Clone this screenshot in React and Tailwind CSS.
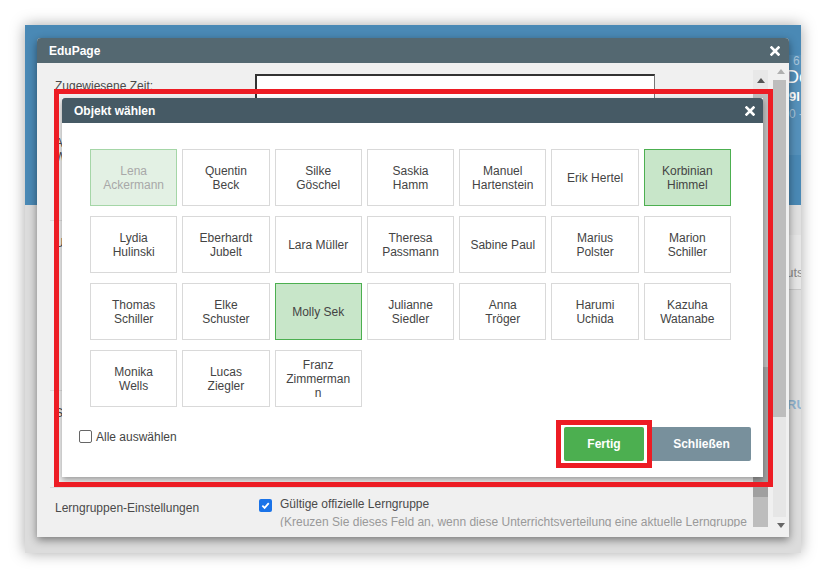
import React from 'react';

const PEOPLE = [
  { lines: ['Lena', 'Ackermann'], state: 'disabled' },
  { lines: ['Quentin', 'Beck'] },
  { lines: ['Silke', 'Göschel'] },
  { lines: ['Saskia', 'Hamm'] },
  { lines: ['Manuel', 'Hartenstein'] },
  { lines: ['Erik Hertel'] },
  { lines: ['Korbinian', 'Himmel'], state: 'selected' },
  { lines: ['Lydia', 'Hulinski'] },
  { lines: ['Eberhardt', 'Jubelt'] },
  { lines: ['Lara Müller'] },
  { lines: ['Theresa', 'Passmann'] },
  { lines: ['Sabine Paul'] },
  { lines: ['Marius', 'Polster'] },
  { lines: ['Marion', 'Schiller'] },
  { lines: ['Thomas', 'Schiller'] },
  { lines: ['Elke', 'Schuster'] },
  { lines: ['Molly Sek'], state: 'selected' },
  { lines: ['Julianne', 'Siedler'] },
  { lines: ['Anna', 'Tröger'] },
  { lines: ['Harumi', 'Uchida'] },
  { lines: ['Kazuha', 'Watanabe'] },
  { lines: ['Monika', 'Wells'] },
  { lines: ['Lucas', 'Ziegler'] },
  { lines: ['Franz', 'Zimmerman', 'n'] },
];

const CloseX = () => (
  <svg width="10" height="10" viewBox="0 0 10 10">
    <path d="M1.5 1.5 L8.5 8.5 M8.5 1.5 L1.5 8.5" stroke="white" strokeWidth="2.6" strokeLinecap="square" />
  </svg>
);

const Arrow = ({ up, color }) => (
  <svg width="8" height="5" viewBox="0 0 8 5">
    <polygon points={up ? '0,5 8,5 4,0' : '0,0 8,0 4,5'} fill={color} />
  </svg>
);

const cellClass = (state) => {
  if (state === 'disabled') return 'bg-[#e3f1e4] border-[#a5d6a7] text-[#a8a8a8]';
  if (state === 'selected') return 'bg-[#c8e6c9] border-[#4caf50] text-[#444]';
  return 'bg-white border-[#d9d9d9] text-[#444]';
};

const PersonCell = ({ person }) => (
  <div className={`h-[57px] border flex flex-col items-center justify-center text-center text-[12px] leading-[14px] ${cellClass(person.state)}`}>
    {person.lines.map((l, i) => <span key={i}>{l}</span>)}
  </div>
);

const EduPageDialog = () => (
  <div className="absolute left-[12px] top-[13px] w-[752px] h-[499px] bg-[#f0f0f0] rounded-t-[4px] shadow-[0_3px_8px_rgba(0,0,0,0.45)]">
    <div className="h-[25px] bg-[#546871] rounded-t-[4px] flex items-center justify-between pl-[12px] pr-[9px]">
      <span className="text-white font-bold text-[12px]">EduPage</span>
      <CloseX />
    </div>
    <div className="flex h-[474px]">
      <div className="w-[716px] pl-[13px] h-[464px] overflow-hidden text-[12px] text-[#4a4a4a]">
        <div className="h-[158px] border-b border-[#dcdcdc] pl-[5px]">
          <div className="flex pt-[11px]">
            <div className="w-[200px] pt-[5px] leading-[14px]">Zugewiesene Zeit:</div>
            <div className="w-[400px] h-[56px] bg-white border border-[#777] border-t-2 border-l-2 border-t-[#333] border-l-[#333]" />
          </div>
          <div className="mt-[6px] leading-[14px]">
            <div>Anzahl der</div>
            <div>Wochenstunden</div>
          </div>
        </div>
        <div className="h-[170px] border-b border-[#dcdcdc] pl-[5px] pt-[15px] leading-[14px]">Unterrichtseinheiten</div>
        <div className="h-[97px] border-b border-[#dcdcdc] pl-[5px] pt-[15px] leading-[14px]">Stundenplan</div>
        <div className="flex pl-[5px] pt-[9px]">
          <div className="w-[200px] pt-[4px] leading-[14px]">Lerngruppen-Einstellungen</div>
          <div className="ml-[4px] mt-[2px] w-[13px] h-[13px] rounded-[2px] bg-[#1a73e8] flex items-center justify-center">
            <svg width="9" height="9" viewBox="0 0 10 10">
              <path d="M1.5 5.2 L4 7.6 L8.6 2.4" stroke="white" strokeWidth="2" fill="none" />
            </svg>
          </div>
          <div className="ml-[8px] leading-[14px]">
            <div>Gültige offizielle Lerngruppe</div>
            <div className="mt-[4px] text-[#999] whitespace-nowrap">(Kreuzen Sie dieses Feld an, wenn diese Unterrichtsverteilung eine aktuelle Lerngruppe</div>
          </div>
        </div>
      </div>
      <div className="w-[15px] mt-[7px] h-[457px] flex flex-col bg-[#bdbdbd]">
        <div className="h-[20px] bg-[#e8e8e8] flex items-center justify-center">
          <Arrow up color="#555" />
        </div>
        <div className="h-[277px]" />
        <div className="h-[130px] bg-[#a0a0a0]" />
      </div>
      <div className="w-[4px]" />
      <div className="w-[17px] h-[474px] flex flex-col">
        <div className="h-[17px] flex items-center justify-center pl-[1px]">
          <Arrow up color="#b0b0b0" />
        </div>
        <div className="h-[337px] ml-[1px] mr-[3px] bg-[#bdbdbd]" />
        <div className="h-[100px] ml-[1px] mr-[3px] bg-[#e6e6e6]" />
        <div className="h-[17px] flex items-center justify-center">
          <Arrow color="#666" />
        </div>
      </div>
    </div>
  </div>
);

const ObjectDialog = () => (
  <div className="absolute left-[37px] top-[73px] w-[701px] h-[379px] bg-white shadow-[0_3px_6px_rgba(0,0,0,0.35)]">
    <div className="h-[25px] bg-[#465a65] rounded-t-[3px] flex items-center justify-between pl-[12px] pr-[8px]">
      <span className="text-white font-bold text-[12px]">Objekt wählen</span>
      <CloseX />
    </div>
    <div className="pt-[26px] pl-[28px]">
      <div className="grid grid-cols-7 w-[641px] gap-x-[5px] gap-y-[10px]">
        {PEOPLE.map((p, i) => <PersonCell key={i} person={p} />)}
      </div>
    </div>
    <div className="mt-[13px] flex justify-between pl-[17px] pr-[12px]">
      <label className="mt-[10px] flex items-center gap-[4px] h-[13px] text-[12px] text-[#444]">
        <span className="w-[13px] h-[13px] border border-[#666] rounded-[2px] bg-white" />
        <span>Alle auswählen</span>
      </label>
      <div className="flex items-center">
        <div className="border-[5px] border-[#ed1c24] px-[3px] py-[2px] bg-white">
          <button className="w-[80px] h-[34px] bg-[#4caf50] rounded-[2px] text-white font-bold text-[12px]">Fertig</button>
        </div>
        <button className="w-[99px] h-[34px] bg-[#78909c] rounded-r-[2px] text-white font-bold text-[12px]">Schließen</button>
      </div>
    </div>
  </div>
);

export default function App() {
  return (
    <div className="w-[826px] h-[578px] bg-white pt-[25px] pl-[25px] font-['Liberation_Sans',Arial,sans-serif]">
      <div className="relative w-[776px] h-[528px] overflow-hidden bg-[#dcdcdc] shadow-[0_0_14px_rgba(0,0,0,0.35)]">
        <div className="h-[180px] bg-[#4a89b5] flex">
          <div className="w-[756px] shrink-0" />
          <div className="mt-[30px] h-[100px] w-[40px] shrink-0 bg-[#5591bb] pl-[5px] text-white leading-none whitespace-nowrap">
            <div className="text-[12px] text-[#a9c6dc] pl-[7px]">6</div>
            <div className="text-[18px] mt-[1px]">De</div>
            <div className="text-[13px] font-bold mt-[4px] pl-[3px]">9I</div>
            <div className="text-[12px] text-[#a9c6dc] mt-[5px] pl-[3px]">0 -</div>
          </div>
        </div>
        <div className="flex">
          <div className="w-[756px] shrink-0" />
          <div className="w-[40px] shrink-0 text-[13px] whitespace-nowrap">
            <div className="h-[30px] bg-[#e0e0e0]" />
            <div className="h-[55px] bg-[#e6e6e6] border-b border-[#c8c8c8] pt-[28px] text-[#888]">
              <span className="ml-[-23px]">Layouts</span>
            </div>
            <div className="pt-[105px] pl-[6px] text-[#8fb3cf] font-bold">RU</div>
          </div>
        </div>
        <EduPageDialog />
        <ObjectDialog />
        <div className="absolute left-[29px] top-[64px] w-[719px] h-[398px] border-[5px] border-[#ed1c24] pointer-events-none" />
      </div>
    </div>
  );
}
